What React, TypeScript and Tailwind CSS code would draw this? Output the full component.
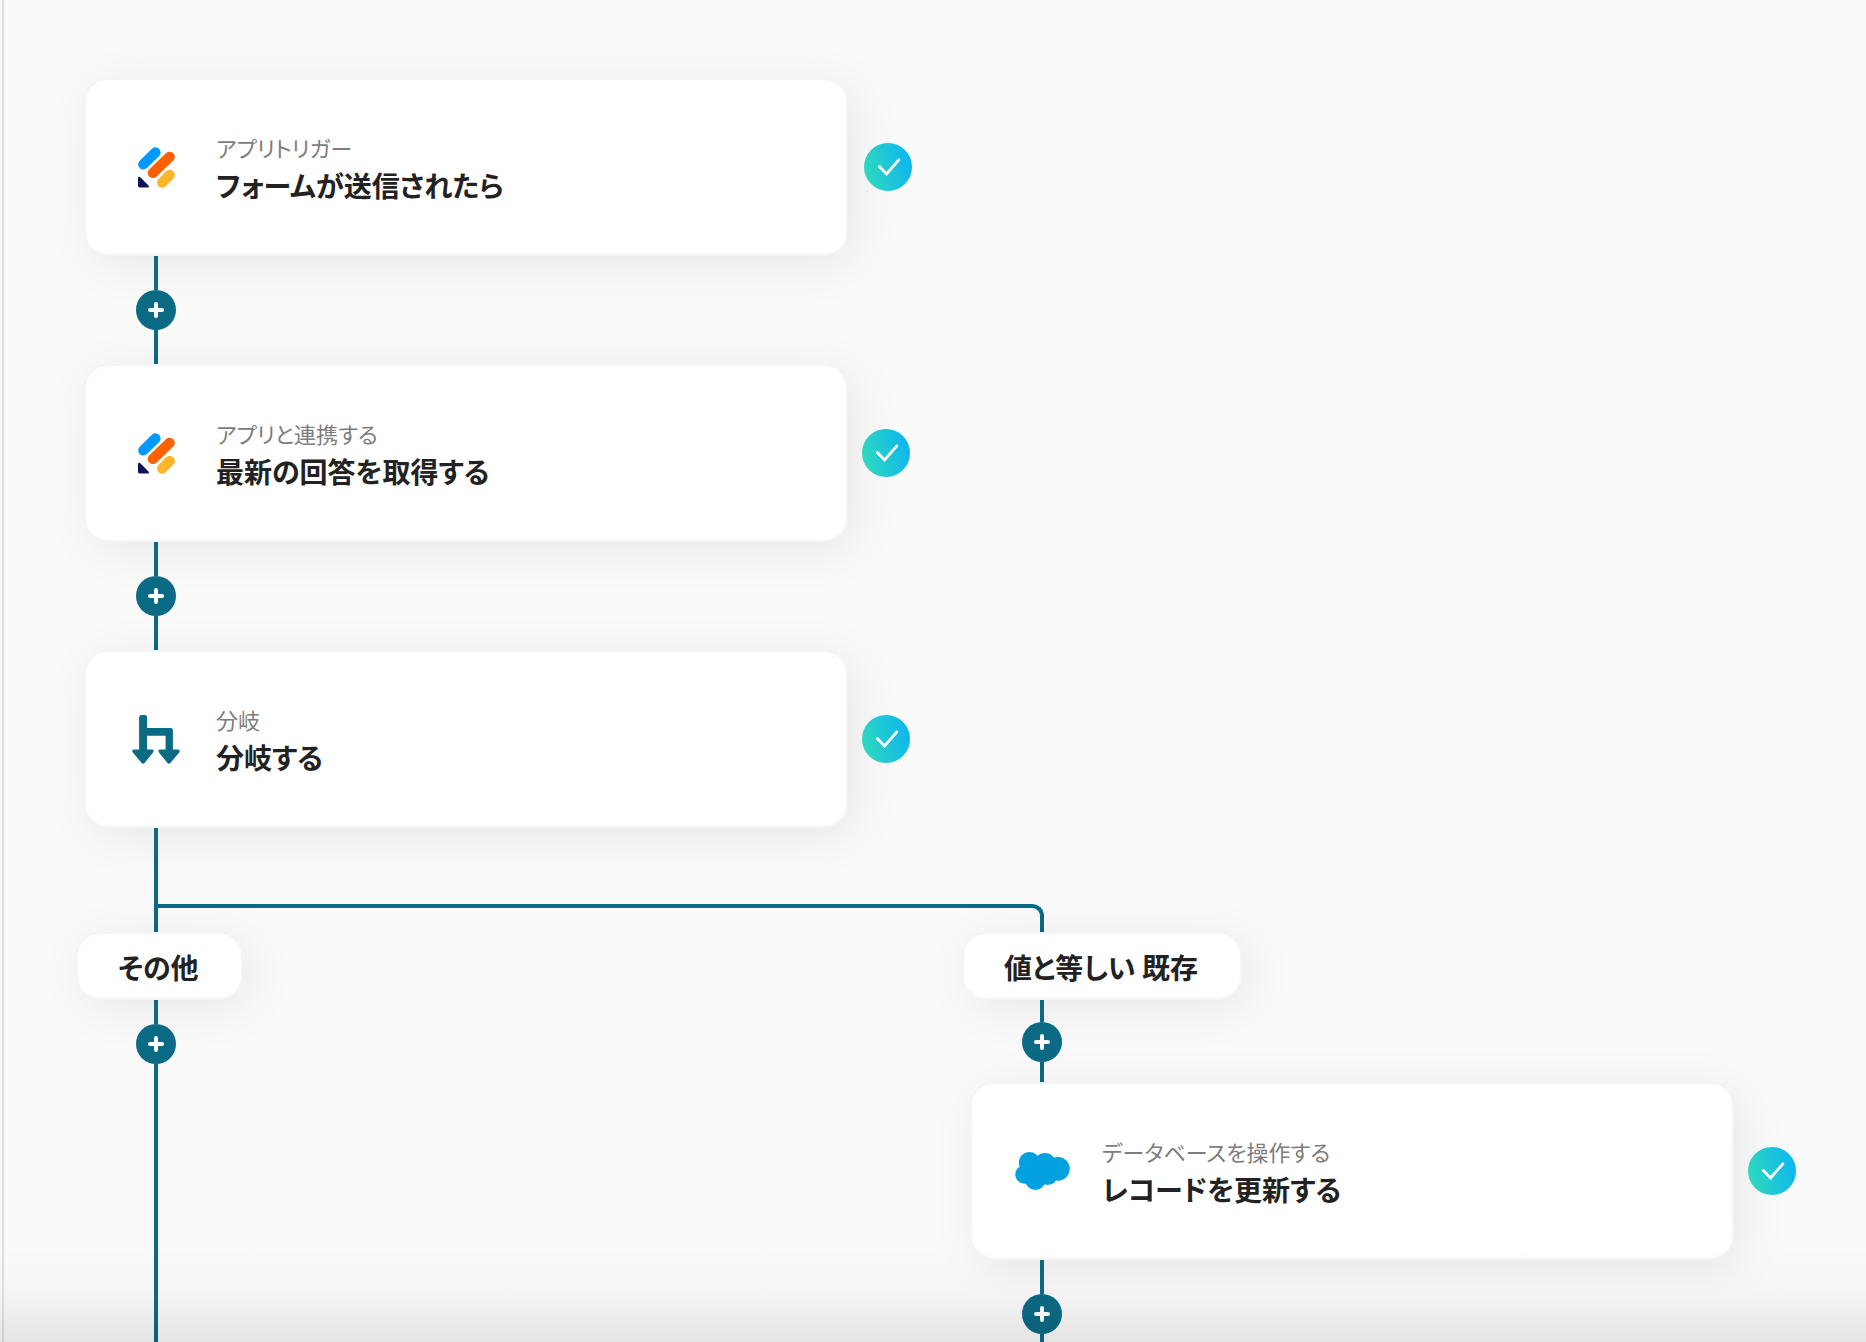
import type { ReactNode } from "react";

interface Step {
  app: "jotform" | "branch" | "salesforce";
  category: string;
  title: string;
}

const trunkSteps: Step[] = [
  { app: "jotform", category: "アプリトリガー", title: "フォームが送信されたら" },
  { app: "jotform", category: "アプリと連携する", title: "最新の回答を取得する" },
  { app: "branch", category: "分岐", title: "分岐する" },
];

const updateStep: Step = {
  app: "salesforce",
  category: "データベースを操作する",
  title: "レコードを更新する",
};

function JotformIcon() {
  return (
    <svg viewBox="204 261 112 123" width="37" height="41" fill="none" strokeLinecap="round" aria-hidden="true">
      <path d="M220 313L257 277" stroke="#0099ff" strokeWidth="31" />
      <path d="M249 339L300 290" stroke="#ff6100" strokeWidth="31" />
      <path d="M277 368L300 345" stroke="#ffb629" strokeWidth="31" />
      <path
        d="M204 354C204 350 208 349 211 352L235 376C239 380 237 383 233 383H209C206 383 204 381 204 378Z"
        fill="#0a1551"
      />
    </svg>
  );
}

function BranchIcon() {
  return (
    <svg viewBox="186 226 144 148" width="48" height="49" fill="#0b6a84" aria-hidden="true">
      <path d="M207 234Q207 226 215 226H223Q231 226 231 234V265H302Q309 265 309 272V330H325Q333 332 328 339L302 370Q297 376 292 370L267 339Q262 332 270 330H287V289H231V330H247Q254 332 249 339L224 370Q219 376 214 370L188 339Q183 332 191 330H207Z" />
    </svg>
  );
}

function SalesforceIcon() {
  return (
    <svg viewBox="164 98 165 115" width="55" height="38" fill="#00a1e0" aria-hidden="true">
      <circle cx="207" cy="130" r="32" />
      <circle cx="254" cy="134" r="33" />
      <circle cx="293" cy="149" r="36" />
      <circle cx="192" cy="166" r="28" />
      <circle cx="225" cy="182" r="31" />
      <circle cx="262" cy="168" r="30" />
    </svg>
  );
}

const icons: Record<Step["app"], ReactNode> = {
  jotform: <JotformIcon />,
  branch: <BranchIcon />,
  salesforce: <SalesforceIcon />,
};

function DoneBadge() {
  return (
    <span
      role="img"
      aria-label="完了"
      className="size-12 shrink-0 rounded-full bg-linear-[75deg] from-[#32dcb8] to-[#0ab2f4]"
    >
      <svg viewBox="0 0 48 48" fill="none" stroke="#fff" strokeWidth="2.8" strokeLinecap="round" aria-hidden="true">
        <path d="M15.3 23.5L22.6 31L34.8 16.8" />
      </svg>
    </span>
  );
}

function StepCard({ step, trigger = false }: { step: Step; trigger?: boolean }) {
  return (
    <div className={`flex items-center ${trigger ? "gap-4" : "gap-3.5"}`}>
      <button
        type="button"
        className="flex h-[178px] w-[764px] shrink-0 items-center gap-8 rounded-3xl border-2 border-[#f5f5f5] bg-white px-[42px] text-left shadow-[8px_8px_48px_rgba(0,0,0,0.08)]"
      >
        <span className="flex w-14 justify-center">{icons[step.app]}</span>
        <span className="flex flex-col pt-1">
          <span className="text-[22px] leading-8 text-[#7d7d7d]">{step.category}</span>
          <span className="text-[28px] leading-11 font-semibold text-[#222]">{step.title}</span>
        </span>
      </button>
      <DoneBadge />
    </div>
  );
}

function AddStep({ before, after }: { before: string; after: string }) {
  return (
    <div className={`ml-[52px] flex w-10 flex-col items-center ${after === "grow" ? "flex-1" : ""}`}>
      <div className={`w-1 bg-[#0b6a84] ${before}`} />
      <button
        type="button"
        aria-label="ステップを追加"
        className="flex size-10 shrink-0 items-center justify-center rounded-full bg-[#0b6a84]"
      >
        <svg viewBox="0 0 16 16" className="size-4" stroke="#fff" strokeWidth="4" strokeLinecap="round" aria-hidden="true">
          <path d="M8 2V14M2 8H14" />
        </svg>
      </button>
      <div className={`w-1 bg-[#0b6a84] ${after === "grow" ? "flex-1" : after}`} />
    </div>
  );
}

function BranchLabel({ children }: { children: ReactNode }) {
  return (
    <button
      type="button"
      className="-ml-2 h-[68px] self-start rounded-3xl border-2 border-[#f5f5f5] bg-white pt-0.5 pr-[42px] pl-10 text-[28px] leading-10 font-semibold whitespace-nowrap text-[#222] shadow-[8px_8px_48px_rgba(0,0,0,0.08)]"
    >
      {children}
    </button>
  );
}

export default function App() {
  return (
    <div className="relative flex h-screen overflow-hidden bg-[#fafafa] font-['Noto_Sans_CJK_JP',sans-serif] [font-feature-settings:'palt']">
      <div className="w-1 shrink-0 border-r-2 border-[#e0e0e0]" />
      <main className="flex flex-1 flex-col pt-[78px] pl-20">
        {trunkSteps.map((step, i) => (
          <div key={step.title}>
            <StepCard step={step} trigger={i === 0} />
            {i < trunkSteps.length - 1 && <AddStep before="h-[34px]" after="h-[34px]" />}
          </div>
        ))}

        <div className="ml-[70px] flex items-end">
          <div className="h-[104px] w-1 bg-[#0b6a84]" />
          <div className="h-7 w-[886px] shrink-0 rounded-tr-xl border-t-4 border-r-4 border-[#0b6a84]" />
        </div>

        <div className="grid flex-1 grid-cols-[886px_auto] justify-start">
          <section className="flex flex-col">
            <BranchLabel>その他</BranchLabel>
            <AddStep before="h-6" after="grow" />
          </section>
          <section className="flex flex-col">
            <BranchLabel>値と等しい 既存</BranchLabel>
            <AddStep before="h-[22px]" after="h-5" />
            <StepCard step={updateStep} />
            <AddStep before="h-[34px]" after="grow" />
          </section>
        </div>
      </main>
      <div className="pointer-events-none absolute inset-x-0 bottom-0 h-24 bg-linear-to-b from-black/0 via-black/2 to-black/9" />
    </div>
  );
}
